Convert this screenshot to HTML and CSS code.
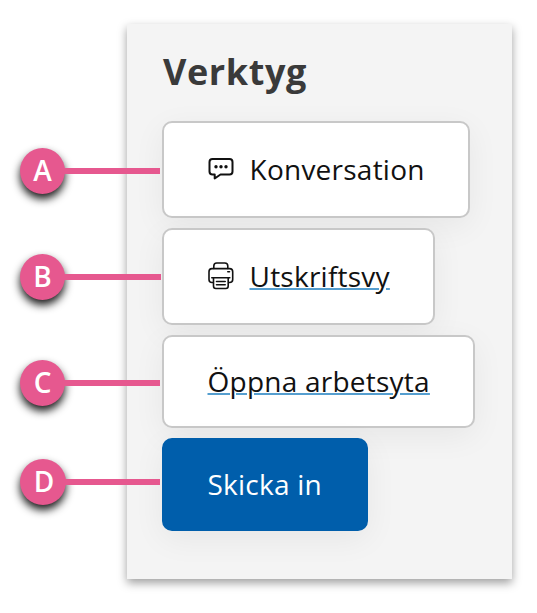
FILE: index.html
```html
<!DOCTYPE html>
<html lang="sv">
  <head>
    <meta charset="UTF-8" />
    <meta name="viewport" content="width=device-width, initial-scale=1.0" />
    <title>Verktyg</title>
    <link rel="stylesheet" href="styles.css">
  </head>
  <body>
    <section class="panel">
      <h2 class="title">Verktyg</h2>

      <ul class="tools">
        <li class="tool">
          <div class="marker marker-a"><span class="letter">A</span><span class="line"></span></div>
          <a class="button with-icon">
            <svg class="icon" viewBox="0 0 26 26" fill="none" stroke="#111" stroke-width="2" stroke-linejoin="round">
              <path d="M4.500 2H21.500Q24.500 2 24.500 5V14.500Q24.500 17.500 21.500 17.500H12.500L6.700 21.500V17.500H4.500Q1.500 17.500 1.500 14.500V5Q1.500 2 4.500 2Z" />
              <g fill="#111" stroke="none">
                <circle cx="8" cy="9.800" r="1.700" />
                <circle cx="13" cy="9.800" r="1.700" />
                <circle cx="18" cy="9.800" r="1.700" />
              </g>
            </svg>
            <span class="text">Konversation</span>
          </a>
        </li>

        <li class="tool">
          <div class="marker marker-b"><span class="letter">B</span><span class="line"></span></div>
          <a class="button with-icon">
            <svg class="icon printer" viewBox="0 0 26 28" fill="none" stroke="#111" stroke-width="1.600" stroke-linecap="round" stroke-linejoin="round">
              <path d="M5.800 6.500V4Q5.800 1 8.800 1H16.800Q19.800 1 19.800 4V6.500" />
              <path d="M5 20.500H4Q1 20.500 1 17.500V9.800Q1 6.600 4 6.600H21.500Q24.700 6.600 24.700 9.800V17.500Q24.700 20.500 21.500 20.500H20.700" />
              <path d="M3.800 15.800H21.800M5.500 15.800V24Q5.500 26.500 7.800 26.500H17.900Q20.200 26.500 20.200 24V15.800" />
              <path d="M8.500 19.500H17.200M8.500 22.800H17.200M19.800 9.700H21.500" />
            </svg>
            <span class="text link">Utskriftsvy</span>
          </a>
        </li>

        <li class="tool">
          <div class="marker marker-c"><span class="letter">C</span><span class="line"></span></div>
          <a class="button"><span class="text link">Öppna arbetsyta</span></a>
        </li>

        <li class="tool">
          <div class="marker marker-d"><span class="letter">D</span><span class="line"></span></div>
          <a class="button primary"><span class="text">Skicka in</span></a>
        </li>
      </ul>
    </section>
  </body>
</html>
```

FILE: styles.css
```css
* {
  margin: 0;
  padding: 0;
  box-sizing: border-box;
}

body {
  min-height: 100vh;
  padding: 24px 25px 34px 127px;
  background: #fff;
  font-family: "Open Sans", "Noto Sans", sans-serif;
  color: #111;
}

/* panel */
.panel {
  width: 385px;
  height: 555px;
  padding: 23px 35px;
  background: #f4f4f4;
  box-shadow: 0 4px 9px rgba(0, 0, 0, 0.38);
}

.title {
  height: 74px;
  padding-left: 1px;
  line-height: 50px;
  font-size: 36px;
  font-weight: 700;
  letter-spacing: 0.6px;
  color: #3a3a3a;
}

/* buttons */
.tools {
  display: flex;
  flex-direction: column;
  align-items: flex-start;
  gap: 10px;
  list-style: none;
}

.tool {
  position: relative;
}

.button {
  display: flex;
  align-items: center;
  height: 93px;
  padding: 0 43.5px;
  border: 2px solid #c8c8c8;
  border-radius: 10px;
  background: #fff;
  box-shadow: 0 8px 32px rgba(0, 0, 0, 0.06);
  font-size: 28px;
  letter-spacing: 0.24px;
  white-space: nowrap;
}

.text {
  padding-bottom: 2px;
}

.with-icon {
  height: 97px;
  gap: 16px;
}

.primary {
  border-color: #005eab;
  background: #005eab;
  color: #fff;
}

.link {
  text-decoration: underline;
  text-decoration-color: #559ecf;
  text-decoration-thickness: 2px;
}

.icon {
  width: 26px;
  height: 26px;
}

.printer {
  height: 28px;
  margin-bottom: 2px;
}

/* letter markers, hanging out to the left of each button */
.marker {
  position: absolute;
  left: -142px;
  z-index: 1;
  display: flex;
  align-items: center;
  width: 140px;
}

.marker-a {
  top: 27px;
}

.marker-b {
  top: 26px;
  width: 141px;
}

.marker-c {
  top: 25px;
}

.marker-d {
  top: 21px;
}

.letter {
  width: 45px;
  height: 46px;
  border-radius: 50%;
  background: #e6588f;
  box-shadow: 0 5px 8px rgba(0, 0, 0, 0.9);
  color: #fff;
  font-size: 28px;
  font-weight: 600;
  line-height: 44px;
  text-align: center;
}

.marker-d .letter {
  width: 46px;
  padding-left: 2px;
}

.line {
  flex: 1;
  height: 6px;
  margin-left: -2px;
  background: #e6588f;
}
```
